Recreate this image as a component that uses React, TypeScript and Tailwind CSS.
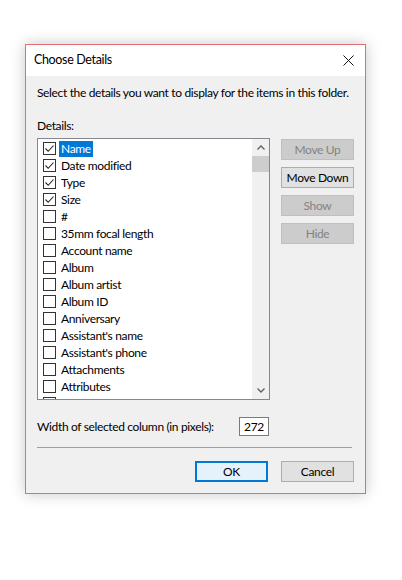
import React from "react";

const items: { label: string; checked: boolean }[] = [
  { label: "Name", checked: true },
  { label: "Date modified", checked: true },
  { label: "Type", checked: true },
  { label: "Size", checked: true },
  { label: "#", checked: false },
  { label: "35mm focal length", checked: false },
  { label: "Account name", checked: false },
  { label: "Album", checked: false },
  { label: "Album artist", checked: false },
  { label: "Album ID", checked: false },
  { label: "Anniversary", checked: false },
  { label: "Assistant's name", checked: false },
  { label: "Assistant's phone", checked: false },
  { label: "Attachments", checked: false },
  { label: "Attributes", checked: false },
  { label: "Audio format", checked: false },
];

function Check({ checked }: { checked: boolean }) {
  return (
    <div className="w-[13px] h-[13px] border border-[#333333] bg-white flex items-center justify-center shrink-0">
      {checked && (
        <svg width="11" height="11" viewBox="0 0 11 11">
          <path d="M1.5 5.5 L4.2 8.3 L9.5 2.5" fill="none" stroke="#222" strokeWidth="1.1" />
        </svg>
      )}
    </div>
  );
}

function SideButton({ label, enabled }: { label: string; enabled?: boolean }) {
  return (
    <div
      className={
        enabled
          ? "w-[73px] h-[21px] border border-[#adadad] bg-[#e1e1e1] text-black flex items-center justify-center whitespace-nowrap"
          : "w-[73px] h-[21px] border border-[#bfbfbf] bg-[#cccccc] text-[#838383] flex items-center justify-center whitespace-nowrap"
      }
    >
      {label}
    </div>
  );
}

export default function App() {
  return (
    <div
      className="w-[402px] h-[580px] bg-white pt-[44px] pl-[25px] text-[12px] tracking-[-0.35px] text-black whitespace-nowrap"
      style={{ fontFamily: 'Lato, "Noto Sans", sans-serif' }}
    >
      <div className="w-[341px] h-[450px] border border-[#df6f70] bg-[#f0f0f0] flex flex-col shadow-[0_0_14px_rgba(0,0,0,0.22)]">
        {/* Title bar */}
        <div className="h-[31px] bg-white flex items-center justify-between pl-[8px] pr-[11px] shrink-0">
          <span className="text-[12.5px]">Choose Details</span>
          <svg width="11" height="11" viewBox="0 0 11 11">
            <path d="M0.5 0.5 L10.5 10.5 M10.5 0.5 L0.5 10.5" stroke="#111" strokeWidth="1" />
          </svg>
        </div>

        {/* Body */}
        <div className="flex flex-col pl-[11px] pr-[11px] pt-[9px]">
          <div className="h-[16px] leading-[16px]">
            Select the details you want to display for the items in this folder.
          </div>
          <div className="h-[16px] leading-[16px] mt-[17px]">Details:</div>

          <div className="flex mt-[4px] gap-[11px]">
            {/* List */}
            <div className="w-[233px] h-[262px] border border-[#828790] bg-white flex overflow-hidden">
              <div className="flex-1 flex flex-col pt-[1px] pl-[5px] overflow-hidden">
                {items.map((it, i) => (
                  <div key={it.label} className="h-[17px] flex items-center shrink-0">
                    <Check checked={it.checked} />
                    {i === 0 ? (
                      <span className="ml-[3px] px-[2px] h-[16px] leading-[16px] bg-[#0078d7] text-white">
                        {it.label}
                      </span>
                    ) : (
                      <span className="ml-[5px] leading-[16px]">{it.label}</span>
                    )}
                  </div>
                ))}
              </div>
              {/* Scrollbar */}
              <div className="w-[17px] h-full bg-[#f0f0f0] flex flex-col shrink-0">
                <div className="h-[17px] flex items-center justify-center">
                  <svg width="8" height="5" viewBox="0 0 8 5">
                    <path d="M0.5 4.5 L4 1 L7.5 4.5" fill="none" stroke="#606060" strokeWidth="1.3" />
                  </svg>
                </div>
                <div className="h-[16px] bg-[#cdcdcd]" />
                <div className="flex-1" />
                <div className="h-[17px] flex items-center justify-center">
                  <svg width="8" height="5" viewBox="0 0 8 5">
                    <path d="M0.5 0.5 L4 4 L7.5 0.5" fill="none" stroke="#606060" strokeWidth="1.3" />
                  </svg>
                </div>
              </div>
            </div>

            {/* Side buttons */}
            <div className="flex flex-col gap-[7px] pt-[1px]">
              <SideButton label="Move Up" />
              <SideButton label="Move Down" enabled />
              <SideButton label="Show" />
              <SideButton label="Hide" />
            </div>
          </div>

          {/* Width row */}
          <div className="flex items-center mt-[17px] w-[232px] justify-between">
            <span>Width of selected column (in pixels):</span>
            <div className="w-[30px] h-[19px] border border-[#7a7a7a] bg-white flex items-center justify-center">
              272
            </div>
          </div>

          <div className="mt-[11px] h-px w-[315px] bg-[#a0a0a0]" />

          <div className="flex justify-end gap-[13px] mt-[13px]">
            <div className="w-[73px] h-[21px] border-2 border-[#0078d7] bg-[#e5f1fb] flex items-center justify-center">
              OK
            </div>
            <div className="w-[73px] h-[21px] border border-[#adadad] bg-[#e1e1e1] flex items-center justify-center">
              Cancel
            </div>
          </div>
        </div>
      </div>
    </div>
  );
}
